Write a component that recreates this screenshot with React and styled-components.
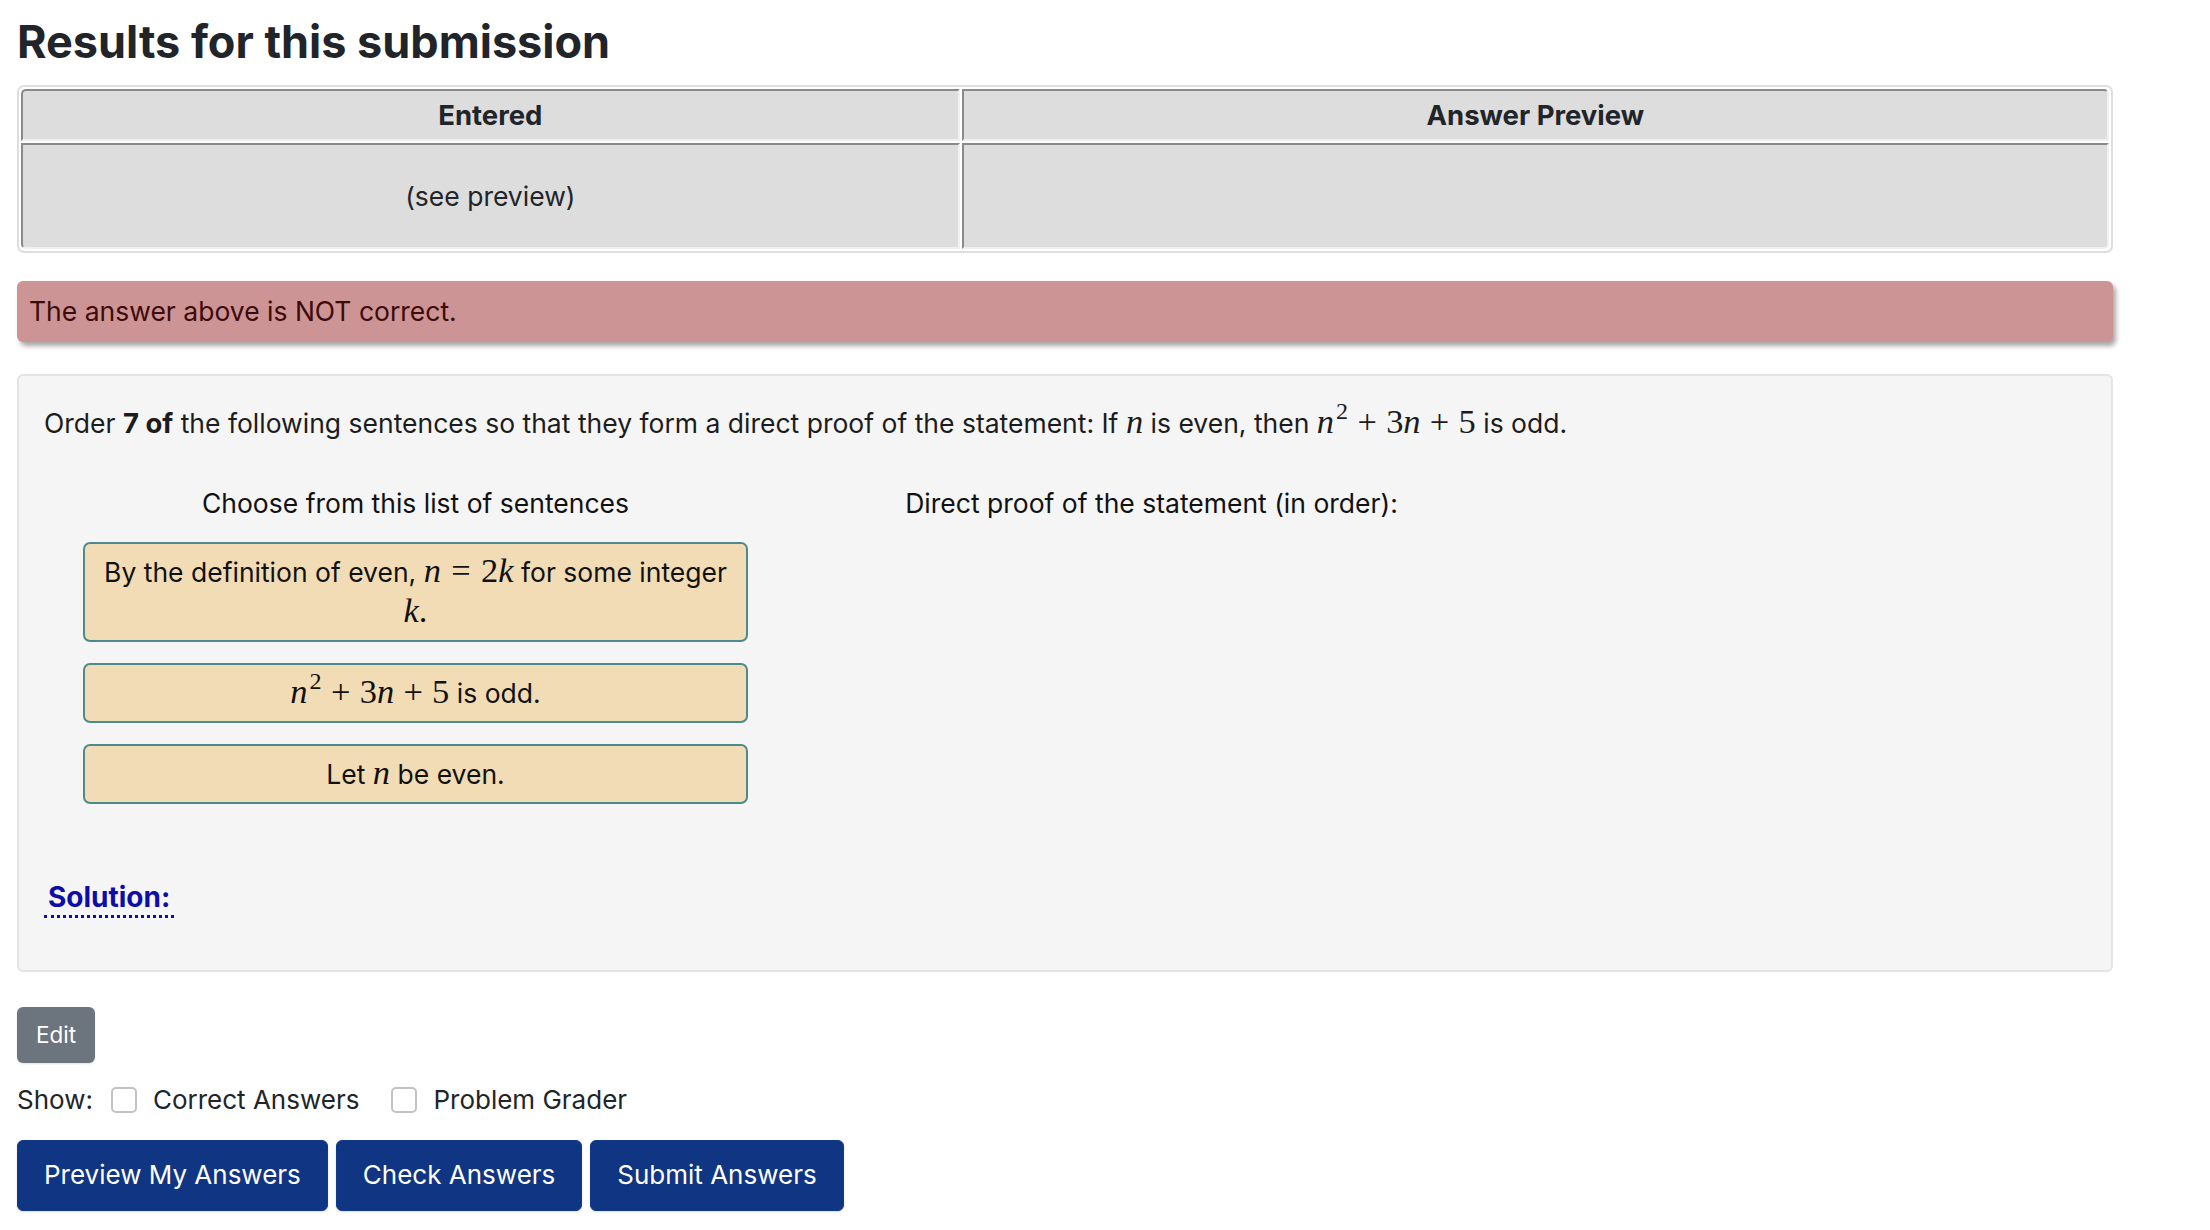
import React from 'react';
import styled, { createGlobalStyle } from 'styled-components';

const GlobalStyle = createGlobalStyle`
  html, body {
    margin: 0;
    padding: 0;
    background: #ffffff;
  }
  body {
    font-family: Inter, "Noto Sans", "Liberation Sans", sans-serif;
    font-size: 26.5px;
    line-height: 40px;
    color: #212529;
  }
  * {
    box-sizing: border-box;
  }
`;

const Page = styled.main`
  width: 2096px;
  margin-left: 17px;
  padding: 15px 0 20px;
`;

const Title = styled.h2`
  margin: 0 0 16px;
  font-size: 45px;
  line-height: 54px;
  font-weight: 700;
  color: #212529;
`;

const ResultsTable = styled.table`
  width: 100%;
  border-collapse: separate;
  border-spacing: 2px;
  border: 2px solid #dedede;
  border-radius: 7px;
  margin-bottom: 28px;
`;

const HeadCell = styled.th`
  padding: 4px 8px;
  background: #dddddd;
  font-size: 27.5px;
  font-weight: 700;
  text-align: center;
  color: #212529;
  border-style: solid;
  border-width: 2px;
  border-color: #8a8a8a #f0f0f0 #f0f0f0 #8a8a8a;

  &:first-child {
    width: 45%;
    border-top-left-radius: 5px;
  }
  &:last-child {
    border-top-right-radius: 5px;
  }
`;

const BodyCell = styled.td`
  padding: 31px 8px;
  background: #dddddd;
  text-align: center;
  color: #212529;
  border-style: solid;
  border-width: 2px;
  border-color: #8a8a8a #f0f0f0 #f0f0f0 #8a8a8a;

  &:first-child {
    border-bottom-left-radius: 5px;
  }
  &:last-child {
    border-bottom-right-radius: 5px;
  }
`;

const Alert = styled.div`
  background: #cc9494;
  color: #3e0a0a;
  padding: 12px;
  line-height: 37px;
  border-radius: 6px;
  box-shadow: 3px 4px 5px rgba(0, 0, 0, 0.35);
  margin-bottom: 32px;
`;

const ProblemPanel = styled.section`
  background: #f5f5f5;
  border: 2px solid #e4e4e4;
  border-radius: 6px;
  padding: 27px 25px 53px;
  color: #1c1c1c;
`;

const Instructions = styled.p`
  margin: 0 0 40px;

  b {
    font-size: 27.5px;
  }
`;

const ProofArea = styled.div`
  display: flex;
  gap: 71px;
  padding-left: 39px;
  margin-bottom: 73px;
`;

const Column = styled.div`
  flex: 0 0 665px;
`;

const ColumnHeading = styled.div`
  text-align: center;
  color: #111;
  margin-bottom: 19px;
  min-height: 40px;
`;

const SentenceList = styled.div`
  display: flex;
  flex-direction: column;
  gap: 21px;
`;

const Sentence = styled.div`
  background: #f2dcb5;
  border: 2px solid #4c8b8d;
  border-radius: 7px;
  padding: 8px 6px;
  text-align: center;
  color: #111;
`;

const Math = styled.span`
  font-family: "Liberation Serif", "DejaVu Serif", serif;
  font-size: 1.3em;
  line-height: 1;
  white-space: nowrap;
`;

const Var = styled.i`
  font-style: italic;
`;

const Sup = styled.sup`
  font-size: 0.7em;
  line-height: 0;
  vertical-align: 0.6em;
  margin-left: 2px;
`;

const Op = styled.span`
  margin: 0 ${(p) => (p.$rel ? '0.3em' : '0.27em')};
`;

const SolutionLine = styled.div`
  min-height: 40px;
`;

const Knowl = styled.a`
  color: #0d0da8;
  font-size: 28px;
  font-weight: 700;
  text-decoration: none;
  padding: 0 4px 1px;
  border-bottom: 3px dotted #0d0da8;
  cursor: pointer;
`;

const EditButton = styled.button`
  margin-top: 35px;
  font-family: inherit;
  font-size: 22.5px;
  line-height: 36px;
  padding: 10px 19px;
  color: #ffffff;
  background: #6c757d;
  border: none;
  border-radius: 6px;
  box-shadow: 0 1px 2px rgba(0, 0, 0, 0.12);
`;

const ShowRow = styled.div`
  display: flex;
  align-items: center;
  height: 40px;
  margin-top: 17px;
  margin-bottom: 20px;
  font-size: 26px;
`;

const ShowLabel = styled.span`
  margin-right: 18px;
`;

const CheckLabel = styled.label`
  display: flex;
  align-items: center;
  gap: 16px;
  margin-right: 32px;
`;

const Checkbox = styled.input.attrs({ type: 'checkbox' })`
  appearance: none;
  margin: 0;
  width: 26px;
  height: 26px;
  border: 2px solid #c2c2c2;
  border-radius: 5px;
  background: #ffffff;
`;

const ButtonRow = styled.div`
  display: flex;
  gap: 8px;
`;

const PrimaryButton = styled.button`
  font-family: inherit;
  font-size: 26px;
  line-height: 40px;
  padding: 14px 26px 15px;
  color: #ffffff;
  background: #103583;
  border: 1px solid #123a8c;
  border-radius: 6px;
  box-shadow: 0 1px 2px rgba(0, 0, 0, 0.15);
`;

const sentences = [
  {
    id: 1,
    content: (
      <>
        By the definition of even,{' '}
        <Math>
          <Var>n</Var>
          <Op $rel>=</Op>2<Var>k</Var>
        </Math>{' '}
        for some integer
        <br />
        <Math>
          <Var>k</Var>.
        </Math>
      </>
    ),
  },
  {
    id: 2,
    content: (
      <>
        <Math>
          <Var>n</Var>
          <Sup>2</Sup>
          <Op>+</Op>3<Var>n</Var>
          <Op>+</Op>5
        </Math>{' '}
        is odd.
      </>
    ),
  },
  {
    id: 3,
    content: (
      <>
        Let{' '}
        <Math>
          <Var>n</Var>
        </Math>{' '}
        be even.
      </>
    ),
  },
];

const App = () => {
  return (
    <>
      <GlobalStyle />
      <Page>
        <Title>Results for this submission</Title>

        <ResultsTable>
          <thead>
            <tr>
              <HeadCell>Entered</HeadCell>
              <HeadCell>Answer Preview</HeadCell>
            </tr>
          </thead>
          <tbody>
            <tr>
              <BodyCell>(see preview)</BodyCell>
              <BodyCell></BodyCell>
            </tr>
          </tbody>
        </ResultsTable>

        <Alert>The answer above is NOT correct.</Alert>

        <ProblemPanel>
          <Instructions>
            Order <b>7 of</b> the following sentences so that they form a direct proof of the
            statement: If{' '}
            <Math>
              <Var>n</Var>
            </Math>{' '}
            is even, then{' '}
            <Math>
              <Var>n</Var>
              <Sup>2</Sup>
              <Op>+</Op>3<Var>n</Var>
              <Op>+</Op>5
            </Math>{' '}
            is odd.
          </Instructions>

          <ProofArea>
            <Column>
              <ColumnHeading>Choose from this list of sentences</ColumnHeading>
              <SentenceList>
                {sentences.map((s) => (
                  <Sentence key={s.id}>{s.content}</Sentence>
                ))}
              </SentenceList>
            </Column>
            <Column>
              <ColumnHeading>Direct proof of the statement (in order):</ColumnHeading>
            </Column>
          </ProofArea>

          <SolutionLine>
            <Knowl>Solution:</Knowl>
          </SolutionLine>
        </ProblemPanel>

        <EditButton>Edit</EditButton>

        <ShowRow>
          <ShowLabel>Show:</ShowLabel>
          <CheckLabel>
            <Checkbox />
            Correct Answers
          </CheckLabel>
          <CheckLabel>
            <Checkbox />
            Problem Grader
          </CheckLabel>
        </ShowRow>

        <ButtonRow>
          <PrimaryButton>Preview My Answers</PrimaryButton>
          <PrimaryButton>Check Answers</PrimaryButton>
          <PrimaryButton>Submit Answers</PrimaryButton>
        </ButtonRow>
      </Page>
    </>
  );
};

export default App;
